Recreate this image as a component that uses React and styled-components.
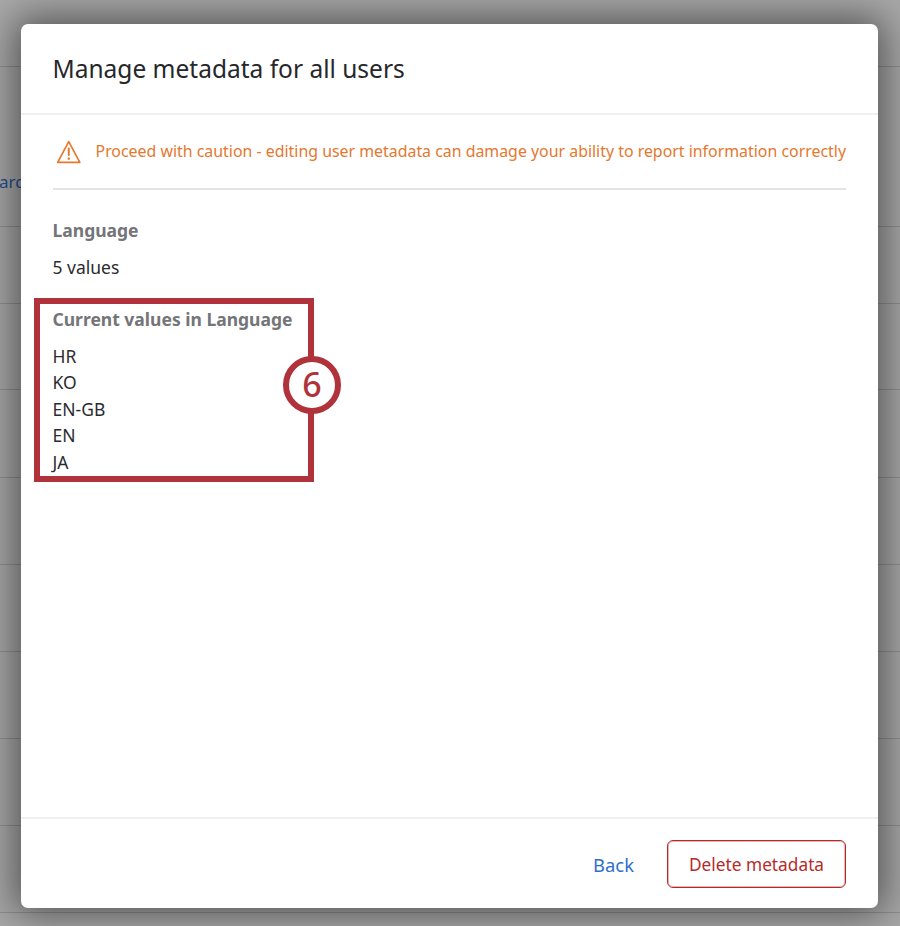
import React from "react";
import styled, { createGlobalStyle } from "styled-components";

const Global = createGlobalStyle`
  html, body { margin: 0; padding: 0; }
  body { font-family: "Noto Sans", "Open Sans", sans-serif; background: #a8a8a8; }
`;

const Page = styled.div`
  position: relative;
  width: 900px;
  height: 926px;
  overflow: hidden;
  background: #a8a8a8;
`;

const BackRows = styled.div`
  display: flex;
  flex-direction: column;
  padding-top: 2px;
`;

const BackRow = styled.div`
  height: ${(p) => p.$h}px;
  box-sizing: border-box;
  border-bottom: 1px solid #8f8f8f;
  display: flex;
  align-items: flex-end;
  padding-bottom: 32px;
  font-size: 17px;
  line-height: 24px;
  color: #24508f;
`;

const ClippedWord = styled.span`
  margin-left: -1px;
`;

const Dialog = styled.div`
  position: absolute;
  left: 21px;
  top: 24px;
  width: 857px;
  height: 884px;
  background: #fff;
  border-radius: 7px;
  box-shadow: 0 0 38px 6px rgba(0, 0, 0, 0.52);
  display: flex;
  flex-direction: column;
  color: #2b2b2f;
`;

const Header = styled.header`
  height: 89px;
  border-bottom: 2px solid #f0f0f0;
  padding-left: 31.5px;
  display: flex;
  align-items: center;
`;

const Title = styled.h2`
  margin: 0;
  font-size: 24.5px;
  font-weight: 400;
  color: #26272b;
`;

const Body = styled.main`
  flex: 1;
  padding: 0 32px 0 31.5px;
  position: relative;
`;

const Warning = styled.div`
  height: 73px;
  border-bottom: 2px solid #e2e3e5;
  display: flex;
  align-items: center;
  gap: 14.5px;
  padding-left: 3px;
  font-size: 15.9px;
  color: #e4782f;
  white-space: nowrap;
`;

const WarningText = styled.span`
  margin-bottom: 2px;
`;

const Label = styled.div`
  font-size: 17.5px;
  font-weight: 700;
  color: #737578;
  line-height: 24px;
  margin-top: ${(p) => p.$top}px;
`;

const ValueCount = styled.div`
  font-size: 17.5px;
  line-height: 24px;
  margin-top: 13px;
`;

const ValueList = styled.ul`
  list-style: none;
  margin: 12px 0 0;
  padding: 0;
  font-size: 17.5px;
  line-height: 26.4px;
`;

const Callout = styled.div`
  position: absolute;
  left: 13px;
  top: 183px;
  width: 280px;
  height: 184px;
  box-sizing: border-box;
  border: 6px solid #b0323a;
`;

const Badge = styled.div`
  position: absolute;
  left: 243px;
  top: 52px;
  width: 58px;
  height: 58px;
  box-sizing: border-box;
  border: 6px solid #b0323a;
  border-radius: 50%;
  background: #fff;
  color: #b0323a;
  font-size: 34px;
  font-weight: 500;
  line-height: 44px;
  text-align: center;
`;

const Footer = styled.footer`
  height: 91px;
  border-top: 2px solid #f0f0f0;
  box-sizing: border-box;
  padding: 1px 32px 0;
  display: flex;
  align-items: center;
  justify-content: flex-end;
  gap: 33px;
`;

const BackLink = styled.span`
  font-size: 18.4px;
  color: #2f6fcb;
`;

const DeleteButton = styled.button`
  width: 179px;
  height: 48px;
  box-sizing: border-box;
  padding: 0;
  background: #fff;
  border: 1px solid #b52b2b;
  box-shadow: inset 0 0 0 1px rgba(181, 43, 43, 0.35);
  border-radius: 6px;
  color: #b52b2b;
  font: 400 17.3px "Noto Sans", "Open Sans", sans-serif;
`;

const WarningIcon = () => (
  <svg width="26" height="26" viewBox="0 0 26 26" fill="none" stroke="currentColor" strokeWidth="1.7" strokeLinejoin="round" strokeLinecap="round">
    <path d="M13 2.5 L24.3 23.5 H1.7 Z" />
    <path d="M13 9.5 V16" strokeWidth="2" />
    <path d="M13 19.6 V19.8" strokeWidth="2.4" />
  </svg>
);

const rows = [
  { h: 65 },
  { h: 160, word: "ard" },
  { h: 77 },
  { h: 86 },
  { h: 88 },
  { h: 87 },
  { h: 87 },
  { h: 87 },
  { h: 87 },
  { h: 87 },
];

export default function App() {
  return (
    <Page>
      <Global />
      <BackRows>
        {rows.map((r, i) => (
          <BackRow key={i} $h={r.h}>
            {r.word && <ClippedWord>{r.word}</ClippedWord>}
          </BackRow>
        ))}
      </BackRows>
      <Dialog>
        <Header>
          <Title>Manage metadata for all users</Title>
        </Header>
        <Body>
          <Warning>
            <WarningIcon />
            <WarningText>Proceed with caution - editing user metadata can damage your ability to report information correctly</WarningText>
          </Warning>
          <Label $top={28}>Language</Label>
          <ValueCount>5 values</ValueCount>
          <Label $top={28}>Current values in Language</Label>
          <ValueList>
            <li>HR</li>
            <li>KO</li>
            <li>EN-GB</li>
            <li>EN</li>
            <li>JA</li>
          </ValueList>
          <Callout>
            <Badge>6</Badge>
          </Callout>
        </Body>
        <Footer>
          <BackLink>Back</BackLink>
          <DeleteButton>Delete metadata</DeleteButton>
        </Footer>
      </Dialog>
    </Page>
  );
}
